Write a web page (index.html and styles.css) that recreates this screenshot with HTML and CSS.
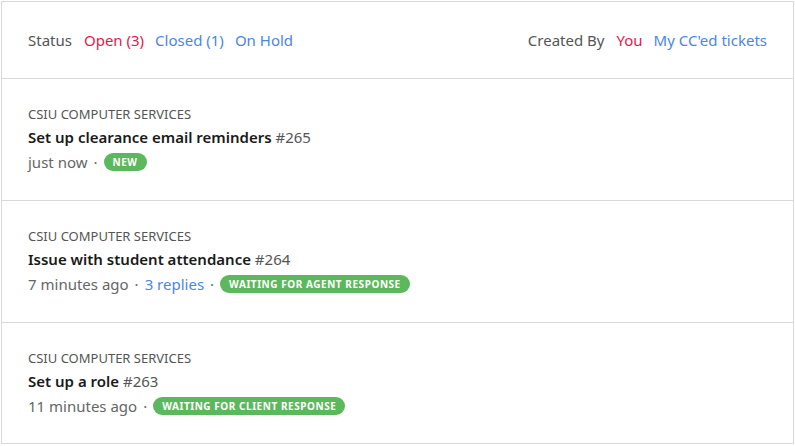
FILE: index.html
```html
<!DOCTYPE html>
<html lang="en">
<head>
    <meta charset="UTF-8">
    <meta name="viewport" content="width=device-width, initial-scale=1.0">
    <title>Tickets</title>
    <link rel="stylesheet" href="styles.css">
</head>
<body>
    <div class="tickets">
        <div class="filters">
            <div class="filter-group">
                <span class="label">Status</span>
                <a class="active">Open (3)</a>
                <a>Closed (1)</a>
                <a>On Hold</a>
            </div>
            <div class="filter-group">
                <span class="label">Created By</span>
                <a class="active">You</a>
                <a>My CC'ed tickets</a>
            </div>
        </div>

        <div class="ticket">
            <div class="org">CSIU Computer Services</div>
            <div class="title"><strong>Set up clearance email reminders</strong> #265</div>
            <div class="meta">
                <span>just now</span>
                <span class="dot">&middot;</span>
                <span class="badge">New</span>
            </div>
        </div>

        <div class="ticket">
            <div class="org">CSIU Computer Services</div>
            <div class="title"><strong>Issue with student attendance</strong> #264</div>
            <div class="meta">
                <span>7 minutes ago</span>
                <span class="dot">&middot;</span>
                <a>3 replies</a>
                <span class="dot">&middot;</span>
                <span class="badge">Waiting for agent response</span>
            </div>
        </div>

        <div class="ticket">
            <div class="org">CSIU Computer Services</div>
            <div class="title"><strong>Set up a role</strong> #263</div>
            <div class="meta">
                <span>11 minutes ago</span>
                <span class="dot">&middot;</span>
                <span class="badge">Waiting for client response</span>
            </div>
        </div>
    </div>
</body>
</html>
```

FILE: styles.css
```css
body {
    margin: 0;
    font-family: "Noto Sans", sans-serif;
    color: #555;
    background: #fff;
}
a {
    color: #4a86e8;
    cursor: pointer;
}
.tickets {
    margin: 1px;
    width: 791px;
    height: 441px;
    border: 1px solid #d9d9d9;
}
.filters {
    display: flex;
    justify-content: space-between;
    padding: 26px 26px 26px 26px;
    border-bottom: 1px solid #d9d9d9;
    font-size: 15px;
    line-height: 24px;
}
.filter-group {
    display: flex;
    gap: 11px;
}
.filter-group .label {
    margin-right: 1px;
}
.filters a.active {
    color: #e8174e;
}
.ticket {
    padding: 27px 26px 26px;
    border-bottom: 1px solid #d9d9d9;
}
.ticket:last-child {
    border-bottom: none;
}
.org {
    font-size: 13px;
    line-height: 17px;
    text-transform: uppercase;
    color: #555;
    margin-bottom: 3px;
}
.title {
    font-size: 15px;
    line-height: 22px;
    color: #555;
}
.title strong {
    font-weight: 600;
    color: #1a1a1a;
}
.meta {
    display: flex;
    align-items: center;
    gap: 6px;
    margin-top: 2px;
    font-size: 15px;
    line-height: 24px;
    color: #666;
}
.badge {
    background: #5cb85c;
    color: #fff;
    font-size: 10px;
    font-weight: 700;
    line-height: 18px;
    letter-spacing: 0.55px;
    text-transform: uppercase;
    padding: 0 9px;
    border-radius: 9px;
}
```
